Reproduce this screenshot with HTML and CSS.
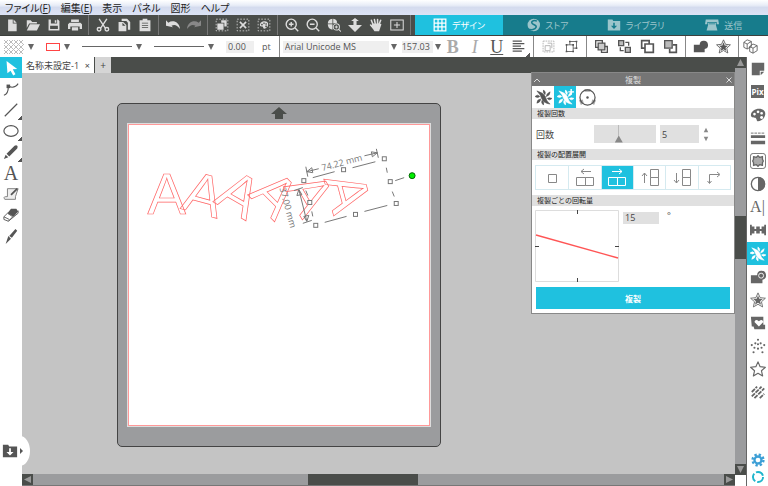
FILE: index.html
```html
<!DOCTYPE html>
<html lang="ja">

<head>
    <meta charset="UTF-8">
    <meta name="viewport" content="width=device-width, initial-scale=1.0">
    <title>名称未設定-1</title>
    <link rel="stylesheet" href="styles.css">
</head>

<body>
    <!-- Shared icon shapes -->
    <svg class="sprite" aria-hidden="true">
        <symbol id="caret" viewBox="0 0 8 8">
            <path d="M1 1h6L4 7z" fill="currentColor" />
        </symbol>
        <symbol id="replicate" viewBox="0 0 18 18">
            <path fill="currentColor" stroke="currentColor" stroke-width=".6" d="M2 2Q9 4 11 8Q12 13 16 16Q9 15 7 10Q6 6 2 2zM9 1Q12 3 10.500 6Q8 4 9 1zM16 3Q16 7 12 8Q12 5 16 3zM18 10Q15 13 13 10Q15 8.500 18 10zM9 17Q6 15 7.500 12Q10 14 9 17zM2 15Q2 11 6 10.500Q6 14 2 15zM0 8Q3 5 5 8Q3 10 0 8z" />
        </symbol>
        <symbol id="star" viewBox="0 0 18 18">
            <path fill="none" stroke="currentColor" stroke-width="1.3" stroke-linejoin="round" d="M9 1l2.4 5.4 5.9.6-4.4 4 1.3 5.8-5.2-3-5.2 3 1.3-5.8-4.400-4 5.900-.6z" />
        </symbol>
        <symbol id="offset-star" viewBox="0 0 18 18">
            <path fill="none" stroke="currentColor" stroke-linejoin="round" d="M9 1l2.4 5.4 5.9.6-4.4 4 1.3 5.8-5.2-3-5.2 3 1.3-5.8-4.400-4 5.900-.6z" />
            <path fill="currentColor" d="M9 4l1.5 3.700 3.900.3-3 2.500 1 3.900L9 12.200l-3.400 2.200 1-3.900-3-2.500 3.900-.3z" />
        </symbol>
        <symbol id="weld" viewBox="0 0 18 18">
            <path fill="currentColor" d="M1 7h7a5 5 0 1 1 6 5v4H1z" />
        </symbol>
        <symbol id="palette" viewBox="0 0 18 18">
            <path fill="currentColor" fill-rule="evenodd" d="M10 2c5 0 8 3 7 7-1 5-5 7-8 7-2 0-1-3-3-4-2 0-5 0-5-3 0-4 5-7 9-7zM5 6.500a1.500 1.500 0 1 0 .1 0zM9 4a1.500 1.500 0 1 0 .1 0zM13 5.500a1.500 1.500 0 1 0 .1 0zM13 10a1.700 1.700 0 1 0 .1 0z" />
        </symbol>
        <symbol id="folder" viewBox="0 0 18 18">
            <path fill="currentColor" fill-rule="evenodd" d="M1 2h6l1 2h9v12H1zM8 6v4H5l4 4 4-4h-3V6z" />
        </symbol>
    </svg>

    <nav class="menubar">
        <button type="button">ファイル(<u>F</u>)</button>
        <button type="button">編集(<u>E</u>)</button>
        <button type="button">表示</button>
        <button type="button">パネル</button>
        <button type="button">図形</button>
        <button type="button">ヘルプ</button>
    </nav>

    <header class="toolbar">
        <div class="group">
            <button type="button" aria-label="新規"><svg viewBox="0 0 18 18"><path fill="currentColor" d="M4 2h6v5h5v10H4zM11 2l4 4h-4z" /></svg></button>
            <button type="button" aria-label="開く"><svg viewBox="0 0 18 18"><path fill="currentColor" d="M1 3h5l2 2h6v2H4L1 13zM5 8h13l-4 8H1z" /></svg></button>
            <button type="button" aria-label="保存"><svg viewBox="0 0 18 18"><path fill="currentColor" fill-rule="evenodd" d="M2 2h12l2 2v12H2zM5 2v5h8V2zM4 10v4h10v-4zM10 3h2v3h-2z" /></svg></button>
            <button type="button" aria-label="印刷"><svg viewBox="0 0 18 18"><path fill="currentColor" fill-rule="evenodd" d="M4 2h10v3H4zM2 6h14l2 2v6h-3v-3H3v3H0V8zM5 12h8v4H5z" /></svg></button>
        </div>
        <div class="group">
            <button type="button" aria-label="切り取り"><svg viewBox="0 0 18 18"><g fill="none" stroke="currentColor" stroke-width="1.8"><path d="M4 1l8 12M14 1L6 13" /><circle cx="4" cy="14.5" r="2.3" /><circle cx="14" cy="14.5" r="2.3" /></g></svg></button>
            <button type="button" aria-label="コピー"><svg viewBox="0 0 18 18"><path fill="currentColor" fill-rule="evenodd" d="M6 1h7l4 4v10h-3V6l-2-2H6zM2 5h6l4 4v8H2zM7 6v4h4z" /></svg></button>
            <button type="button" aria-label="貼り付け"><svg viewBox="0 0 18 18"><path fill="currentColor" fill-rule="evenodd" d="M2 3h4V1h6v2h4v14H2zM5 6v1h8V6zM5 9v1h8V9zM5 12v1h8v-1z" /></svg></button>
        </div>
        <div class="group">
            <button type="button" aria-label="元に戻す"><svg viewBox="0 0 18 18"><path fill="currentColor" d="M0 10V3l3 3c6-4 14-1 15 8-4-5-7-6-11-4l2 2z" /></svg></button>
            <button type="button" class="dim" aria-label="やり直す"><svg viewBox="0 0 18 18"><path fill="currentColor" d="M18 10V3l-3 3C9 2 1 5 0 14c4-5 7-6 11-4l-2 2z" /></svg></button>
        </div>
        <div class="group">
            <button type="button" aria-label="すべて選択"><svg viewBox="0 0 18 18"><path fill="none" stroke="currentColor" stroke-dasharray="2 2" d="M1.500 1.500h15v15h-15z" /><path fill="currentColor" d="M8 3h7v8h-3V6H8zM3 7h8v8H3z" /></svg></button>
            <button type="button" aria-label="選択解除"><svg viewBox="0 0 18 18"><path fill="none" stroke="currentColor" stroke-dasharray="2 2" d="M1.500 1.500h15v15h-15z" /><path stroke="currentColor" stroke-width="2" d="M5 5l8 8M13 5l-8 8" /></svg></button>
            <button type="button" aria-label="色で選択"><svg viewBox="0 0 18 18"><path fill="none" stroke="currentColor" stroke-dasharray="2 2" d="M1.500 1.500h15v15h-15z" /><use href="#palette" x="3" y="3" width="12" height="12" /></svg></button>
        </div>
        <div class="group">
            <button type="button" aria-label="拡大"><svg viewBox="0 0 18 18"><g fill="none" stroke="currentColor" stroke-width="1.8"><circle cx="8" cy="8" r="6.5" /><path d="M13 13l4 4M5 8h6M8 5v6" /></g></svg></button>
            <button type="button" aria-label="縮小"><svg viewBox="0 0 18 18"><g fill="none" stroke="currentColor" stroke-width="1.8"><circle cx="8" cy="8" r="6.5" /><path d="M13 13l4 4M5 8h6" /></g></svg></button>
            <button type="button" aria-label="選択ズーム"><svg viewBox="0 0 18 18"><path fill="currentColor" d="M7 1v6H1q0-5 6-6zM8 1q5 1 5 5l-5 1zM1 8h6v7q-6-1-6-7z" /><g fill="none" stroke="currentColor" stroke-width="1.3"><circle cx="12" cy="11.5" r="4" /><path d="M15 14.500l3 3M10 11.500h4M12 9.500v4" /></g></svg></button>
            <button type="button" aria-label="ドラッグズーム"><svg viewBox="0 0 18 18"><path fill="currentColor" d="M9 0l5 4h-3v5h7l-9 9-9-9h7V4H4z" /></svg></button>
            <button type="button" aria-label="移動"><svg viewBox="0 0 18 18"><path fill="none" stroke="currentColor" stroke-width="2" stroke-linecap="round" d="M5 8L3 3M8 7L7 2M11 7V2M13 8l2-5M5 12l-3-3" /><path fill="currentColor" d="M4 7h10l2 1-3 9H7l-4-6z" /></svg></button>
            <button type="button" aria-label="画面に合わせる"><svg viewBox="0 0 18 18"><path fill="none" stroke="currentColor" stroke-width="1.3" d="M1 2.500h16v13H1zM9 5v8M5 9h8" /></svg></button>
        </div>
        <nav class="modes">
            <a href="#design" class="active"><svg viewBox="0 0 18 18"><path fill="none" stroke="currentColor" stroke-width="1.6" d="M1.500 1.500h15v15h-15zM6.500 1v16M11.500 1v16M1 6.500h16M1 11.500h16" /></svg>デザイン</a>
            <a href="#store"><svg viewBox="0 0 18 18"><circle cx="10" cy="9" r="8" fill="currentColor" /><path fill="none" stroke="#177c8c" stroke-width="2" d="M14 4c-5-2-8 1-6 3s6 2 5 5-6 4-11 2" /></svg>ストア</a>
            <a href="#library"><svg viewBox="0 0 18 18"><use href="#folder" /></svg>ライブラリ</a>
            <a href="#send"><svg viewBox="0 0 18 18"><path fill="currentColor" fill-rule="evenodd" d="M1 2h16l1 6h-3V5H3v3H0zM4 6h10v3l2 7H2l2-7zM5 8h8V7H5z" /></svg>送信</a>
        </nav>
    </header>

    <div class="options">
        <div class="group styles">
            <button type="button" class="picker" aria-label="塗りつぶし"><svg class="pattern" viewBox="0 0 20 14"><path fill="none" stroke="#bbb" d="M0 4l4-4M0 9l9-9M0 14L14 0M5 14L19 0M10 14L20 4M15 14l5-5M0 10l4 4M0 5l9 9M0 0l14 14M5 0l14 14M10 0l10 10M15 0l5 5" /></svg><svg class="caret"><use href="#caret" /></svg></button>
            <button type="button" class="picker" aria-label="線の色"><span class="line-color"></span><svg class="caret"><use href="#caret" /></svg></button>
            <button type="button" class="picker" aria-label="線種"><span class="line-style"></span><svg class="caret"><use href="#caret" /></svg></button>
            <button type="button" class="picker" aria-label="線の太さ"><span class="line-style"></span><svg class="caret"><use href="#caret" /></svg></button>
            <label class="unit"><input type="text" class="width" value="0.00">pt</label>
        </div>
        <div class="group text">
            <select class="font" aria-label="フォント">
                <option>Arial Unicode MS</option>
            </select>
            <svg class="caret"><use href="#caret" /></svg>
            <select class="size" aria-label="フォントサイズ">
                <option>157.03</option>
            </select>
            <svg class="caret"><use href="#caret" /></svg>
            <button type="button" class="letter pale"><b>B</b></button>
            <button type="button" class="letter pale"><i>I</i></button>
            <button type="button" class="letter"><u>U</u></button>
            <button type="button" class="more" aria-label="揃え"><svg viewBox="0 0 18 18"><path stroke="currentColor" stroke-width="1.3" d="M2 2.500h11M2 5.500h14M2 8.500h10M2 11.500h14M2 14.500h11" /></svg></button>
        </div>
        <div class="group">
            <button type="button" class="pale" aria-label="グループ化"><svg viewBox="0 0 18 18"><path fill="none" stroke="currentColor" d="M5 8h6v6H5zM8 5h5v6" /><path fill="none" stroke="currentColor" stroke-dasharray="2 1" d="M2.500 2.500h13v13h-13z" /></svg></button>
            <button type="button" aria-label="グループ解除"><svg viewBox="0 0 18 18"><path fill="none" stroke="currentColor" d="M3 7h8v8H3zM7 7V3h8v8h-4" /><path fill="currentColor" d="M2 6h2v2H2zM10 6h2v2h-2zM2 14h2v2H2zM10 14h2v2h-2zM6 2h2v2H6zM14 2h2v2h-2zM14 10h2v2h-2z" /></svg></button>
        </div>
        <div class="group">
            <button type="button" aria-label="最前面"><svg viewBox="0 0 18 18"><g stroke="currentColor" stroke-width="1.6"><path fill="none" d="M2 2h8v8H2zM9 9h7v7H9z" /><path fill="#ccc" d="M5 5h8v8H5z" /></g></svg></button>
            <button type="button" aria-label="最背面"><svg viewBox="0 0 18 18"><g fill="#bbb" stroke="currentColor" stroke-width="1.6"><path d="M2 2h6v6H2zM10 10h6v6h-6z" /><path fill="none" d="M10 4h4v4M8 14H4v-4" /></g></svg></button>
            <button type="button" aria-label="前面へ"><svg viewBox="0 0 18 18"><g fill="#fff" stroke="currentColor" stroke-width="2"><path d="M2 2h9v9H2z" /><path d="M6 6h10v10H6z" /></g></svg></button>
            <button type="button" aria-label="背面へ"><svg viewBox="0 0 18 18"><path fill="none" stroke="currentColor" stroke-width="2" d="M12 7h4v9H8v-4" /><path fill="#bbb" stroke="currentColor" stroke-width="1.6" d="M2 2h9v9H2z" /></svg></button>
        </div>
        <div class="group">
            <button type="button" aria-label="溶接"><svg viewBox="0 0 18 18"><use href="#weld" /></svg></button>
            <button type="button" aria-label="オフセット"><svg viewBox="0 0 18 18"><use href="#offset-star" /></svg></button>
        </div>
        <div class="group last">
            <button type="button" aria-label="立体"><svg viewBox="0 0 18 18"><path fill="#fff" stroke="currentColor" d="M1 4l4-3 5 2v6l-5 3-4-2zM1 4l4 2 5-3M5 6v6M8 9l4-3 5 2v6l-5 3-4-2zM8 9l4 2 5-3M12 11v6" /></svg></button>
        </div>
    </div>

    <div class="main">
        <aside class="tools">
            <button type="button" class="active" aria-label="選択"><svg viewBox="0 0 18 18"><path fill="currentColor" d="M4 1l12 9-5 .5 3 5.500-2.500 1.500-3-5.500-3.500 3z" /></svg></button>
            <button type="button" aria-label="ポイント編集"><svg viewBox="0 0 18 18"><path fill="none" stroke="currentColor" stroke-width="1.3" d="M1 16q5-1 5-10 7 3 11-3" /><path fill="currentColor" d="M4 4h4v4H4z" /></svg></button>
            <button type="button" class="more" aria-label="直線"><svg viewBox="0 0 18 18"><path stroke="currentColor" stroke-width="1.3" d="M2 16L16 2" /></svg></button>
            <button type="button" class="more" aria-label="楕円"><svg viewBox="0 0 18 18"><ellipse cx="9" cy="9" rx="8" ry="6" fill="none" stroke="currentColor" stroke-width="1.3" /></svg></button>
            <button type="button" class="more" aria-label="フリーハンド"><svg viewBox="0 0 18 18"><path fill="currentColor" d="M13 2q2-1 3 0t0 3l-9 9-3-3zM3 12l3 3-5 2z" /></svg></button>
            <button type="button" class="letter">A</button>
            <button type="button" aria-label="スケッチ"><svg viewBox="0 0 18 18"><path fill="#eee" stroke="#777" d="M5 3h12l-3 9v3H2q-2-3 1-3h2z" /><path stroke="currentColor" stroke-width="2" d="M16 3l-7 7" /></svg></button>
            <button type="button" aria-label="消しゴム"><svg viewBox="0 0 18 18"><path fill="currentColor" d="M9 2h6l2 3-5 6-7-4z" /><path fill="none" stroke="currentColor" d="M5 7l-4 4v3l5 2 11-9V4M5 7l6 4-5 5M1 11l6 3" /></svg></button>
            <button type="button" aria-label="ナイフ"><svg viewBox="0 0 18 18"><path fill="currentColor" d="M14 1l2 2-6 8-3-2zM6 9l3 3-6 6z" /></svg></button>
            <div class="drawer">
                <button type="button" aria-label="ライブラリを開く"><svg viewBox="0 0 18 18"><use href="#folder" /></svg></button>
            </div>
        </aside>

        <section class="document">
            <div class="tabs">
                <div class="tab">名称未設定-1<button type="button" aria-label="閉じる">×</button></div>
                <button type="button" class="add" aria-label="追加">+</button>
            </div>
            <div class="canvas">
                <div class="mat">
                    <svg class="feed" viewBox="0 0 16 14"><path fill="#4a4d4a" d="M8 1l8 7h-4v5H4V8H0z" /></svg>
                    <div class="page">
                        <svg class="drawing" viewBox="127 123 304 304">
                            <g class="copies">
                                <text transform="translate(166 214)">A</text>
                                <text transform="translate(198 213) rotate(15)">A</text>
                                <text transform="translate(229 211) rotate(30)">A</text>
                                <text transform="translate(261 208) rotate(45)">A</text>
                                <text transform="translate(293 203) rotate(60)">A</text>
                                <text transform="translate(329 197) rotate(75)">A</text>
                            </g>
                            <!-- Selection frame and handles -->
                            <path class="frame" d="M313 177l22-6M353 167l23-6M387 167l1 5M393 191l2 5M325 222l22-6M365 211l23-6M306 190l2 5M312 211l1 5M396 180l9-3" />
                            <g class="handles">
                                <rect x="302" y="178" width="4" height="4" />
                                <rect x="342" y="167" width="4" height="4" />
                                <rect x="383" y="156" width="4" height="4" />
                                <rect x="389" y="179" width="4" height="4" />
                                <rect x="395" y="201" width="4" height="4" />
                                <rect x="354" y="212" width="4" height="4" />
                                <rect x="314" y="223" width="4" height="4" />
                                <rect x="308" y="200" width="4" height="4" />
                            </g>
                            <circle cx="413" cy="175" r="3" fill="#0e0" stroke="#060" />
                            <!-- Dimensions -->
                            <path class="frame" d="M306 166l2 10M307 171l12-3M307 171l5-4 1 5zM377 148l2 9M365 155l13-3M378 152l-6-1 1 5zM294 190l9-3M303 223l9-3M299 189l8 32M299 189l-2 6 5-1zM307 221l-3-5 5-1z" />
                            <text class="dimension" transform="translate(343 165) rotate(-15)">74.22 mm</text>
                            <text class="dimension" transform="translate(285 208) rotate(75)">37.00 mm</text>
                        </svg>
                    </div>
                </div>
            </div>
            <div class="scroll-x"><span class="end left"></span><span class="thumb"></span><span class="end right"></span></div>
        </section>

        <div class="scroll-y"><span class="end up"></span><span class="thumb"></span><span class="end down"></span></div>

        <aside class="panels">
            <div class="panel-icons">
                <button type="button" aria-label="ページ設定"><svg viewBox="0 0 18 18"><path fill="currentColor" d="M2 2h14v9h-5v5H2zM12 12h4l-4 4z" /></svg></button>
                <button type="button" aria-label="PixScan"><span class="pix">Pix</span></button>
                <button type="button" aria-label="塗り"><svg viewBox="0 0 18 18"><use href="#palette" /></svg></button>
                <button type="button" aria-label="線"><svg viewBox="0 0 18 18"><path stroke="currentColor" stroke-dasharray="3 1" d="M1 3.500h16" /><path fill="currentColor" d="M1 6h16v3H1zM1 12h16v4H1z" /></svg></button>
                <button type="button" aria-label="トレース"><svg viewBox="0 0 18 18"><rect x=".5" y=".5" width="17" height="17" rx="3" fill="none" stroke="currentColor" /><path fill="#aaa" stroke="currentColor" stroke-width="1.5" stroke-linejoin="round" d="M4 4l3 1 2-2 2 2 3-1v3l1 2-1 2v3l-3-1-2 2-2-2-3 1v-3L3 9l1-2z" /></svg></button>
                <button type="button" aria-label="コントラスト"><svg viewBox="0 0 18 18"><circle cx="9" cy="9" r="7.5" fill="none" stroke="currentColor" stroke-width="1.5" /><path fill="currentColor" d="M9 1a8 8 0 0 1 0 16z" /></svg></button>
                <button type="button" class="letter">A|</button>
                <button type="button" aria-label="整列"><svg viewBox="0 0 18 18"><path fill="currentColor" d="M0 3h2v2h3v3h2V5h4v3h2V5h3V3h2v12h-2v-2h-3v-3h-2v3H7v-3H5v3H2v2H0z" /></svg></button>
                <button type="button" class="active" aria-label="複製"><svg viewBox="0 0 18 18"><use href="#replicate" /></svg></button>
                <button type="button" aria-label="モディファイ"><svg viewBox="0 0 18 18"><use href="#weld" /><circle cx="12.5" cy="7.5" r="2.8" fill="none" stroke="#fff" /></svg></button>
                <button type="button" aria-label="オフセット"><svg viewBox="0 0 18 18"><use href="#offset-star" /></svg></button>
                <button type="button" aria-label="デザイン"><svg viewBox="0 0 18 18"><path fill="currentColor" fill-rule="evenodd" d="M1 2h14v9h2v5H5l-1-3H2zM10 13L5 8q1-4 5-1 4-3 5 1z" /></svg></button>
                <button type="button" aria-label="ラインストーン"><svg viewBox="0 0 18 18"><path stroke="currentColor" stroke-width="2.4" stroke-linecap="round" d="M9 2h0M6 6h0M12 6h0M2 8h0M16 8h0M5 11h0M13 11h0M9 12h0M4 16h0M14 16h0M9 7h0" /></svg></button>
                <button type="button" aria-label="星"><svg viewBox="0 0 18 18"><use href="#star" /></svg></button>
                <button type="button" aria-label="スケッチ"><svg viewBox="0 0 18 18"><path stroke="currentColor" stroke-width="2" stroke-dasharray="5 1" d="M2 9l6-6M2 14L13 3M5 16L16 5M11 16l5-5" /></svg></button>
            </div>
            <button type="button" class="settings" aria-label="設定"><svg viewBox="0 0 18 18"><circle cx="9" cy="9" r="4.5" fill="none" stroke="currentColor" stroke-width="3" /><circle cx="9" cy="9" r="7" fill="none" stroke="currentColor" stroke-width="3" stroke-dasharray="3 2.5" /></svg></button>
            <button type="button" class="sync" aria-label="同期"><svg viewBox="0 0 18 18"><circle cx="9" cy="9" r="6.5" fill="none" stroke="currentColor" stroke-width="2.5" stroke-dasharray="11 2.6" /></svg></button>
        </aside>

        <form class="replicate">
            <div class="title">
                <button type="button" aria-label="折りたたむ"><svg viewBox="0 0 8 8"><path fill="none" stroke="currentColor" d="M1 6l3-3 3 3" /></svg></button>
                <h2>複製</h2>
                <button type="button" aria-label="閉じる"><svg viewBox="0 0 8 8"><path fill="none" stroke="currentColor" d="M1.500 1.500l5 5M6.500 1.500l-5 5" /></svg></button>
            </div>
            <div class="kinds">
                <button type="button" aria-label="基本"><svg viewBox="0 0 18 18"><use href="#replicate" /></svg></button>
                <button type="button" class="active" aria-label="詳細"><svg viewBox="0 0 18 18"><use href="#replicate" /><path stroke="currentColor" stroke-width="1.5" d="M15 0v6M12 3h6" /></svg></button>
                <button type="button" aria-label="円形"><svg viewBox="0 0 18 18"><path fill="#aaa" d="M6 0h6v3H6zM0 12l4-1 1 4-3 2zM18 12l-4-1-1 4 3 2z" /><circle cx="9" cy="9" r="8" fill="none" stroke="currentColor" stroke-width="1.3" /><circle cx="9" cy="9" r="1.3" fill="currentColor" /></svg></button>
            </div>
            <h3>複製回数</h3>
            <div class="count">
                <label for="count">回数</label>
                <input type="range" min="0" max="13" value="5" aria-label="回数スライダー">
                <input type="text" id="count" value="5">
                <div class="stepper">
                    <button type="button" class="up" aria-label="増やす"><svg><use href="#caret" /></svg></button>
                    <button type="button" aria-label="減らす"><svg><use href="#caret" /></svg></button>
                </div>
            </div>
            <h3>複製の配置展開</h3>
            <div class="places">
                <button type="button" aria-label="なし"><svg viewBox="0 0 24 20"><path d="M8.500 6.500h8v8h-8z" /></svg></button>
                <button type="button" aria-label="左"><svg viewBox="0 0 24 20"><path d="M3.500 9.500h9v8h-9zM12.500 9.500h8v8h-8zM18 3.500H8M11 1L8 3.500 11 6" /></svg></button>
                <button type="button" class="active" aria-label="右"><svg viewBox="0 0 24 20"><path d="M3.500 9.500h9v8h-9zM12.500 9.500h8v8h-8zM7 3.500h10M14 1l3 2.500L14 6" /></svg></button>
                <button type="button" aria-label="上"><svg viewBox="0 0 24 20"><path d="M12.500 1.500h8v8h-8zM12.500 9.500h8v8h-8zM6.500 15V5M4 8l2.500-3L9 8" /></svg></button>
                <button type="button" aria-label="下"><svg viewBox="0 0 24 20"><path d="M12.500 1.500h8v8h-8zM12.500 9.500h8v8h-8zM6.500 5v10M4 12l2.500 3L9 12" /></svg></button>
                <button type="button" aria-label="自由"><svg viewBox="0 0 24 20"><path d="M7.500 15V6.500H17M15 4l3 2.500L15 9M5.500 13l2 2.500 2-2.500" /></svg></button>
            </div>
            <h3>複製ごとの回転量</h3>
            <div class="rotation">
                <svg class="dial" viewBox="0 0 84 72"><path fill="none" stroke="#ddd" d="M.5.5h83v71H.5z" /><path stroke="#444" d="M42.500 0v4M42.500 68v4M0 36.500h4M80 36.500h4" /><path stroke="#f55" stroke-width="1.3" d="M1 25l82 23" /></svg>
                <label><input type="text" value="15">°</label>
            </div>
            <button type="button" class="apply">複製</button>
        </form>
    </div>
</body>

</html>
```

FILE: styles.css
```css
* {
    box-sizing: border-box;
}

body {
    font-family: "Open Sans", "Noto Sans CJK JP", sans-serif;
    font-size: 10px;
    color: #444;
    background-color: #fff;
    margin: 0;
    height: 100vh;
    display: flex;
    flex-direction: column;
    overflow: hidden;
}

button,
input,
select {
    font: inherit;
    color: inherit;
    border: none;
    border-radius: 0;
    background: none;
    padding: 0;
    margin: 0;
}

button {
    display: flex;
    align-items: center;
    justify-content: center;
    flex-shrink: 0;
}

svg {
    display: block;
    flex-shrink: 0;
}

.sprite {
    display: none;
}

.caret {
    width: 8px;
    height: 8px;
    color: #666;
}

.active {
    background-color: #1fc1df;
    color: #fff;
}

/* Menu bar */
.menubar {
    display: flex;
    gap: 10px;
    height: 15px;
    flex-shrink: 0;
    padding: 0 5px;
    color: #222;
    background: linear-gradient(#fff, #e8edf7 35%, #d4dbee 50%, #dce3f5);
    font-feature-settings: "palt";
}

.menubar button {
    line-height: 14px;
}

/* Main toolbar */
.toolbar {
    display: flex;
    height: 21px;
    flex-shrink: 0;
    color: #ddd;
    background-color: #4a4d4a;
    border-bottom: 1px solid #3d403d;
}

.toolbar .group {
    display: flex;
    padding: 0 3px;
    border-right: 1px solid #777;
}

.toolbar .group:first-child {
    padding-left: 1px;
}

.toolbar .group button {
    width: 21px;
}

.toolbar svg {
    width: 14px;
    height: 14px;
}

.toolbar .dim {
    color: #888;
}

.modes {
    display: grid;
    grid-template-columns: repeat(4, 1fr);
    flex: 1;
    margin-left: 4px;
    background-color: #177c8c;
}

.modes a {
    display: flex;
    align-items: center;
    justify-content: center;
    gap: 5px;
    font-size: 9px;
    color: #9cc5cb;
    text-decoration: none;
    font-feature-settings: "palt";
}

.modes a.active {
    color: #fff;
}

/* Style options */
.options {
    display: flex;
    height: 21px;
    flex-shrink: 0;
    overflow: hidden;
    font-size: 9px;
    color: #555;
}

.options .group {
    display: flex;
    align-items: center;
    flex-shrink: 0;
    padding: 0 3px;
    border-right: 1px solid #888;
}

.options .last {
    border: none;
    padding: 0;
}

.options .group > button {
    width: 23px;
    height: 21px;
}

.options .group > button svg:only-child {
    width: 15px;
    height: 15px;
}

.options .styles {
    gap: 11px;
    padding: 0 8px 0 4px;
}

.options .styles .picker {
    width: auto;
    gap: 3px;
}

.pattern {
    width: 20px;
    height: 14px;
}

.line-color {
    width: 14px;
    height: 8px;
    border: 1px solid #f44;
}

.line-style {
    width: 50px;
    height: 1px;
    background-color: #666;
}

.unit {
    display: flex;
    align-items: center;
    gap: 8px;
}

.unit input,
.options select {
    height: 12px;
    line-height: 12px;
    background-color: #efefef;
}

.unit .width {
    width: 28px;
    padding-left: 2px;
}

.options select {
    appearance: none;
    padding-left: 2px;
}

.options .font {
    width: 106px;
    margin-right: 1px;
}

.options .size {
    width: 31px;
    margin: 0 1px 0 4px;
    padding: 0;
}

.options .text > .letter,
.options .text > .more {
    width: 22px;
}

.letter {
    font-family: "Liberation Serif", serif;
    font-size: 18px;
    line-height: 20px;
}

.options .pale {
    color: #aaa;
}

.more {
    background: linear-gradient(135deg, transparent 50%, #555 50%) right bottom / 4px 4px no-repeat;
}

/* Work area */
.main {
    display: flex;
    flex: 1;
    min-height: 0;
    position: relative;
}

.tools {
    display: flex;
    flex-direction: column;
    width: 22px;
    color: #555;
}

.tools > button {
    height: 21px;
}

.tools svg {
    width: 16px;
    height: 16px;
}

.tools .letter {
    font-size: 20px;
}

.drawer {
    position: absolute;
    left: 0;
    bottom: 20px;
    width: 30px;
    height: 30px;
    display: flex;
    align-items: center;
    gap: 2px;
    padding-left: 2px;
    background-color: #fff;
    border-radius: 0 10px 10px 0 / 0 15px 15px 0;
}

.drawer::after {
    content: "";
    border: 3px solid transparent;
    border-left-color: #555;
}

.document {
    display: flex;
    flex-direction: column;
    flex: 1;
    min-width: 0;
}

.tabs {
    display: flex;
    height: 16px;
    background-color: #4a4d4a;
}

.tab {
    display: flex;
    align-items: center;
    justify-content: space-between;
    width: 72px;
    padding: 0 4px;
    font-size: 9px;
    background-color: #fff;
}

.add {
    width: 16px;
    margin-left: 1px;
    background-color: #d5d5d5;
}

.canvas {
    flex: 1;
    min-height: 0;
    padding: 30px 95px;
    overflow: hidden;
    background-color: #c4c4c4;
}

.mat {
    display: flex;
    flex-direction: column;
    align-items: center;
    width: 324px;
    padding: 2px 9px 19px;
    background-color: #9b9c9e;
    border: 1px solid #444;
    border-radius: 5px;
}

.feed {
    width: 16px;
    height: 14px;
    margin-bottom: 3px;
}

.page {
    width: 100%;
    background-color: #fff;
    border: 1px solid #ddd;
    outline: 1px solid #f99;
    outline-offset: -2px;
}

.drawing {
    width: 100%;
}

.copies text {
    font: 58px "Liberation Sans", sans-serif;
    text-anchor: middle;
    fill: none;
    stroke: #f66;
    stroke-width: 0.7;
}

.frame,
.handles {
    fill: none;
    stroke: #777;
}

.handles {
    fill: #fff;
}

.dimension {
    font-size: 9px;
    text-anchor: middle;
    fill: #777;
}

/* Scroll bars */
.scroll-x,
.scroll-y {
    display: flex;
    background-color: #9b9c9e;
}

.scroll-x {
    height: 12px;
    border-bottom: 1px solid #777;
}

.scroll-y {
    flex-direction: column;
    width: 11px;
    margin-bottom: 11px;
}

.end {
    width: 11px;
    height: 11px;
    display: grid;
    place-items: center;
    background-color: #4a4d4a;
}

.end::after {
    content: "";
    width: 7px;
    height: 7px;
    background-color: #999;
    clip-path: polygon(50% 0, 100% 100%, 0 100%);
}

.down::after {
    clip-path: polygon(0 0, 100% 0, 50% 100%);
}

.left::after {
    clip-path: polygon(0 50%, 100% 0, 100% 100%);
}

.right::after {
    clip-path: polygon(0 0, 100% 50%, 0 100%);
}

.thumb {
    background-color: #4a4d4a;
}

.scroll-x .thumb {
    width: 110px;
    margin: 0 auto 0 275px;
}

.scroll-y .thumb {
    height: 43px;
    margin: 148px 0 auto;
}

/* Panel launcher */
.panels {
    display: flex;
    flex-direction: column;
    width: 22px;
    padding-bottom: 1px;
    border-left: 1px solid #666;
    color: #666;
}

.panels svg {
    width: 16px;
    height: 16px;
}

.panel-icons {
    display: grid;
    grid-template-rows: repeat(15, 1fr);
    height: 347px;
    margin-bottom: auto;
}

.panel-icons .letter {
    font-size: 16px;
}

.pix {
    font-size: 8px;
    font-weight: bold;
    line-height: 13px;
    color: #fff;
    background-color: #666;
}

.settings,
.sync {
    height: 17px;
    color: #3d9fd6;
}

.settings svg,
.sync svg {
    width: 14px;
    height: 14px;
}

.sync {
    color: #1fb5cc;
}

/* Replicate panel */
.replicate {
    position: absolute;
    top: 15px;
    right: 33px;
    width: 204px;
    padding-bottom: 4px;
    background-color: #fff;
    border: 1px solid #888;
}

.title {
    display: flex;
    align-items: center;
    justify-content: space-between;
    height: 13px;
    padding: 0 1px;
    color: #ddd;
    background-color: #757575;
}

.title svg {
    width: 8px;
    height: 8px;
}

.title h2 {
    margin: 0;
    font-size: 8px;
    font-weight: normal;
}

.kinds {
    display: flex;
    height: 22px;
    color: #555;
}

.kinds button {
    width: 22px;
}

.kinds svg {
    width: 17px;
    height: 17px;
}

.replicate h3 {
    margin: 0;
    padding-left: 5px;
    font-size: 7px;
    font-weight: normal;
    line-height: 11px;
    color: #222;
    background-color: #e0e0e0;
}

.count {
    display: flex;
    align-items: center;
    height: 30px;
    padding: 0 4px;
    gap: 4px;
    font-size: 9px;
}

.count label {
    flex: 1;
}

.count input {
    height: 18px;
    background-color: #e0e0e0;
}

.count input[type="text"] {
    width: 39px;
    padding-left: 2px;
}

.count input[type="range"] {
    width: 62px;
    appearance: none;
    background-image: linear-gradient(#bbb, #bbb);
    background-size: 1px 12px;
    background-position: 24px 0;
    background-repeat: no-repeat;
}

.count input[type="range"]::-webkit-slider-thumb {
    appearance: none;
    width: 8px;
    height: 7px;
    margin-top: 10px;
    background-color: #888;
    clip-path: polygon(50% 0, 100% 100%, 0 100%);
}

.stepper {
    display: grid;
    gap: 3px;
    width: 27px;
    justify-items: start;
    color: #888;
}

.stepper svg {
    width: 6px;
    height: 6px;
}

.stepper .up svg {
    transform: rotate(180deg);
}

.places {
    display: grid;
    grid-template-columns: repeat(6, 1fr);
    height: 25px;
    margin: 5px 3px;
    border: 1px solid #d5eaf0;
}

.places button + button {
    border-left: 1px solid #d5eaf0;
}

.places svg {
    width: 24px;
    height: 20px;
    fill: none;
    stroke: #888;
}

.places .active svg {
    stroke: #fff;
}

.rotation {
    display: flex;
    gap: 4px;
    margin: 4px 3px 5px;
}

.dial {
    width: 84px;
    height: 72px;
}

.rotation label {
    display: flex;
    gap: 8px;
    font-size: 9px;
    line-height: 12px;
}

.rotation input {
    width: 36px;
    height: 12px;
    margin-top: 2px;
    padding-left: 2px;
    background-color: #e0e0e0;
}

.apply {
    width: calc(100% - 8px);
    height: 22px;
    margin: 0 4px;
    font-size: 8px;
    font-weight: bold;
    color: #fff;
    background-color: #1fc1df;
}
```
